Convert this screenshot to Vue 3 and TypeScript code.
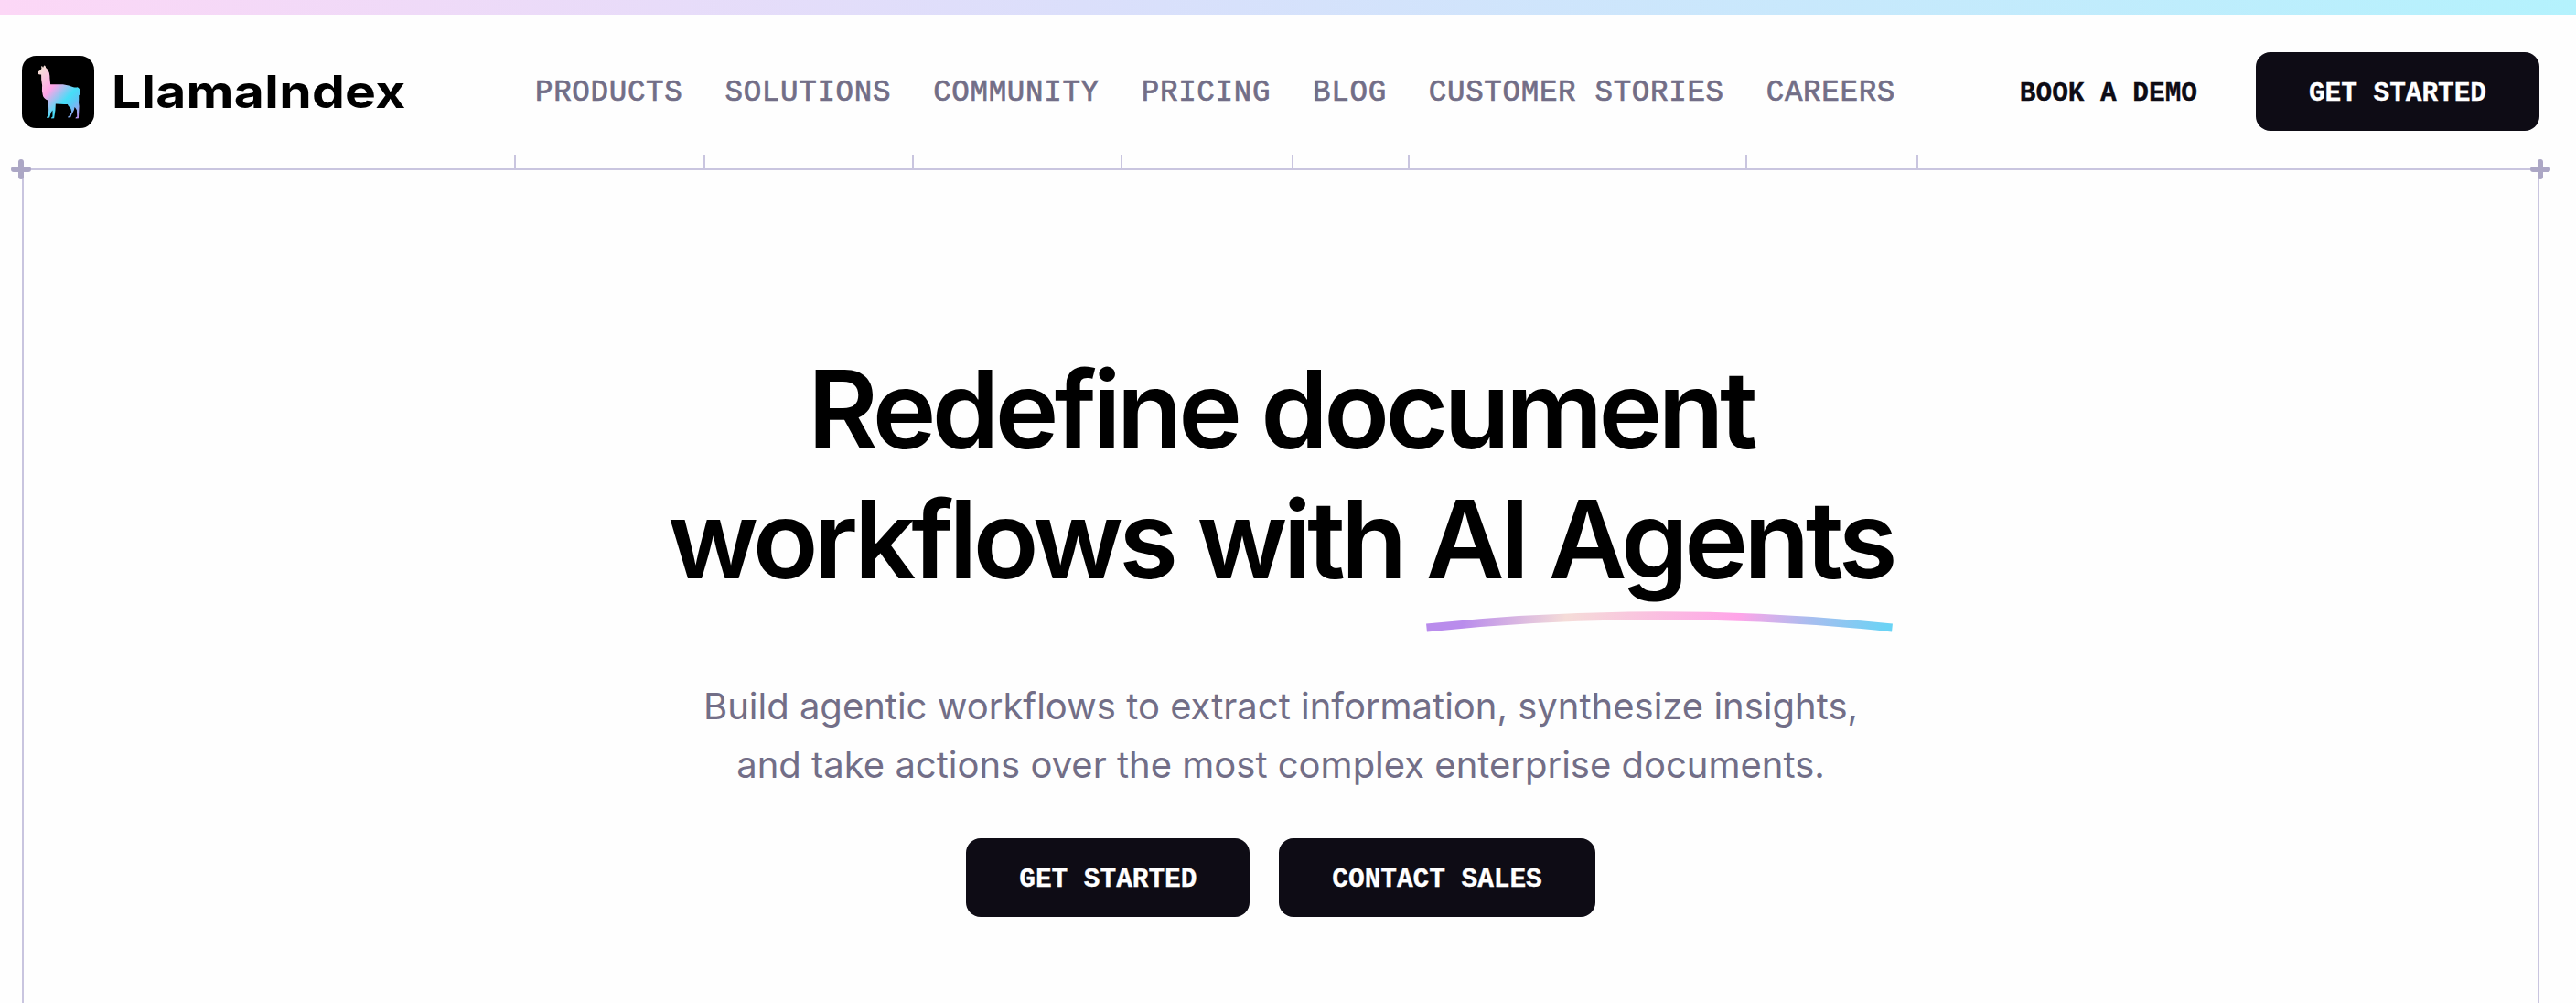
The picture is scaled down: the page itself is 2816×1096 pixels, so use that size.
<script setup lang="ts">
const links: string[] = ['Products', 'Solutions', 'Community', 'Pricing', 'Blog', 'Customer Stories', 'Careers']
</script>

<template>
  <div class="page">
    <div class="stripe"></div>
    <header class="header">
      <a class="brand">
        <svg class="badge" viewBox="12 14 236 236" aria-hidden="true">
          <defs>
            <linearGradient id="llama" gradientUnits="userSpaceOnUse" x1="62" y1="60" x2="214" y2="196">
              <stop offset="0.05" stop-color="#f6dcd6" />
              <stop offset="0.36" stop-color="#ffa4e8" />
              <stop offset="0.66" stop-color="#45dff8" />
              <stop offset="0.78" stop-color="#5cc8f5" />
              <stop offset="1" stop-color="#b98cec" />
            </linearGradient>
          </defs>
          <rect x="12" y="14" width="236" height="236" rx="46" fill="#000" />
          <path
            fill="url(#llama)"
            d="M76 56 L75 48 Q79 47 80 51 L82 51 Q83 44 87 46 Q90 49 90 53 Q98 58 101 69 Q103 78 103 88 L105 107 Q124 108 146 107 Q166 110 180 116 Q188 118 193 116 Q202 120 203 132 Q204 141 198 143 L198 157 Q196 168 199 178 L197 218 L187 219 Q186 215 192 213 L191 191 Q187 183 184 181 Q183 190 179 197 Q174 205 171 215 L162 216 Q161 212 167 210 L174 197 Q174 187 168 182 Q163 178 161 172 Q146 173 122 171 L121 191 L117 218 L108 219 Q107 215 112 213 L112 192 Q107 197 105 206 L102 216 L93 217 Q93 213 98 209 L99 190 L98 160 Q82 154 80 142 Q76 130 78 110 Q74 91 75 75 Q70 76 65 74 Q61 70 64 66 Q69 63 72 61 Z"
          />
        </svg>
        <span class="wordmark">LlamaIndex</span>
      </a>
      <nav class="nav">
        <a v-for="link in links" :key="link" class="nav-link">{{ link }}</a>
      </nav>
      <div class="actions">
        <a class="demo">Book a demo</a>
        <a class="btn">Get started</a>
      </div>
    </header>
    <main class="frame">
      <svg v-for="side in ['left', 'right']" :key="side" class="plus" :class="side" viewBox="0 0 22 22">
        <path d="M11 3V19M3 11H19" stroke="#aca7c5" stroke-width="6" stroke-linecap="round" />
      </svg>
      <h1 class="title">
        <span class="line">Redefine document</span>
        <span class="line">workflows with <span class="accent">AI Agents<svg class="swoosh" viewBox="0 0 510 24">
          <defs>
            <linearGradient id="arc" gradientUnits="userSpaceOnUse" x1="30" y1="-40" x2="500" y2="40">
              <stop offset="0.04" stop-color="#b98cec" />
              <stop offset="0.27" stop-color="#f5dcd8" />
              <stop offset="0.66" stop-color="#ffa4e8" />
              <stop offset="0.82" stop-color="#a9bdef" />
              <stop offset="1" stop-color="#6ad3f5" />
            </linearGradient>
          </defs>
          <path d="M0.5 18Q255 -8.8 509.5 18" fill="none" stroke="url(#arc)" stroke-width="8.8" />
        </svg></span></span>
      </h1>
      <p class="lead">
        Build agentic workflows to extract information, synthesize insights,<br />
        and take actions over the most complex enterprise documents.
      </p>
      <div class="cta">
        <a class="btn">Get started</a>
        <a class="btn">Contact sales</a>
      </div>
    </main>
  </div>
</template>

<style>
body {
  background: #fefefe;
}
</style>

<style scoped>
.page {
  display: flex;
  flex-direction: column;
  box-sizing: border-box;
  width: 2816px;
  height: 1096px;
  overflow: hidden;
  font-family: Inter, sans-serif;
  color: #000;
}
.stripe {
  flex: none;
  height: 16px;
  background: linear-gradient(90deg, #fcd7f6, #dbdffb 42%, #b4f2fd);
}
.header {
  display: flex;
  flex: none;
  box-sizing: border-box;
  height: 168px;
  padding: 0 40px 0 24px;
}
.brand {
  display: flex;
  align-items: center;
  width: 538px;
  height: 168px;
  gap: 19px;
}
.badge {
  flex: none;
  width: 79px;
  height: 79px;
}
.wordmark {
  font-size: 50px;
  font-weight: 700;
  letter-spacing: 0.2px;
  white-space: nowrap;
  transform: scaleX(1.14);
  transform-origin: left;
}
.nav {
  display: flex;
  border-left: 2px solid transparent;
  border-image: linear-gradient(#fefefe 152px, #c9c5df 152px) 1;
  border-width: 0 0 0 2px;
}
.nav-link {
  box-sizing: border-box;
  height: 168px;
  padding: 0 23px 0 21px;
  border-right: 2px solid;
  border-image: linear-gradient(#fefefe 152px, #c9c5df 152px) 1;
  border-width: 0 2px 0 0;
  color: #726e87;
  font: 400 32.5px/172px 'Liberation Mono', monospace;
  letter-spacing: 0.68px;
  text-transform: uppercase;
  white-space: nowrap;
  -webkit-text-stroke: 0.7px #726e87;
}
.actions {
  display: flex;
  align-items: center;
  margin-left: auto;
  gap: 64px;
}
.demo,
.btn {
  height: 86px;
  font: 700 29.5px/90px 'Liberation Mono', monospace;
  letter-spacing: -0.06px;
  text-transform: uppercase;
  white-space: nowrap;
  -webkit-text-stroke: 0.3px currentColor;
}
.demo {
  color: #0e0c15;
}
.btn {
  padding: 0 58px;
  border-radius: 16px;
  background: #0e0c15;
  color: #fff;
}
.frame {
  position: relative;
  display: flex;
  flex: 1;
  flex-direction: column;
  align-items: center;
  margin: 0 40px 0 24px;
  border: 2px solid #c9c5df;
  border-bottom: 0;
}
.plus {
  position: absolute;
  top: -12px;
  width: 22px;
  height: 22px;
}
.left {
  left: -14px;
}
.right {
  right: -14px;
}
.title {
  display: flex;
  flex-direction: column;
  align-items: center;
  margin: 190px 0 0;
  font-size: 118px;
  font-weight: 600;
  line-height: 142px;
  letter-spacing: -4.72px;
  white-space: nowrap;
}
.accent {
  position: relative;
}
.swoosh {
  position: absolute;
  left: 0;
  bottom: -32px;
  width: 510px;
  height: 24px;
}
.lead {
  margin: 80px 0 0;
  color: #726e87;
  font-size: 40px;
  line-height: 64px;
  text-align: center;
  white-space: nowrap;
}
.cta {
  display: flex;
  margin-top: 48px;
  gap: 32px;
}
</style>
